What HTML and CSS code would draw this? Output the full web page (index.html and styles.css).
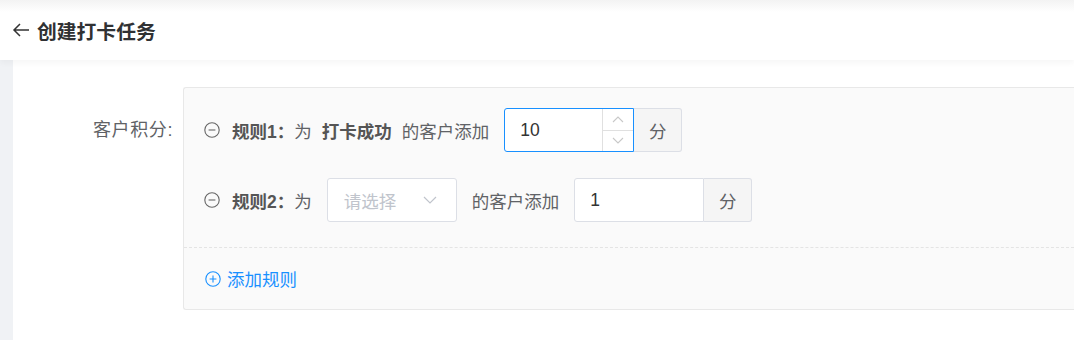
FILE: index.html
```html
<!DOCTYPE html>
<html lang="zh-CN">
<head>
  <meta charset="UTF-8">
  <meta name="viewport" content="width=device-width, initial-scale=1.0">
  <title>创建打卡任务</title>
  <link rel="stylesheet" href="styles.css">
</head>
<body>
  <div class="header">
    <svg class="back" width="18" height="16" viewBox="0 0 18 16">
      <path d="M17 8H2M8 2L2 8l6 6" fill="none" stroke="#333" stroke-width="1.5"/>
    </svg>
    <h1>创建打卡任务</h1>
  </div>

  <div class="layout">
    <div class="side"></div>
    <div class="content">
      <div class="form-item">
        <label class="form-label">客户积分:</label>
        <div class="panel">
          <div class="rules">
            <div class="rule">
              <svg class="icon" width="16" height="16" viewBox="0 0 16 16">
                <circle cx="8" cy="8" r="7.2" fill="none" stroke="#666" stroke-width="1.1"/>
                <path d="M4.6 8h6.8" stroke="#666" stroke-width="1.1"/>
              </svg>
              <span class="bold">规则1：</span><span>为</span>
              <span class="bold event">打卡成功</span>
              <span class="txt">的客户添加</span>
              <div class="number focus">
                <span class="val">10</span>
                <div class="steps">
                  <span class="step"><svg width="12" height="8" viewBox="0 0 12 8"><path d="M1 7l5-5 5 5" fill="none" stroke="#c8c8c8" stroke-width="1.1"/></svg></span>
                  <span class="step"><svg width="12" height="8" viewBox="0 0 12 8"><path d="M1 1l5 5 5-5" fill="none" stroke="#c8c8c8" stroke-width="1.1"/></svg></span>
                </div>
              </div>
              <span class="addon">分</span>
            </div>

            <div class="rule">
              <svg class="icon" width="16" height="16" viewBox="0 0 16 16">
                <circle cx="8" cy="8" r="7.2" fill="none" stroke="#666" stroke-width="1.1"/>
                <path d="M4.6 8h6.8" stroke="#666" stroke-width="1.1"/>
              </svg>
              <span class="bold">规则2：</span><span>为</span>
              <div class="select">
                <span class="placeholder">请选择</span>
                <svg width="14" height="8" viewBox="0 0 14 8"><path d="M1 1l6 6 6-6" fill="none" stroke="#c0c4cc" stroke-width="1.2"/></svg>
              </div>
              <span class="txt">的客户添加</span>
              <div class="number">
                <span class="val">1</span>
              </div>
              <span class="addon">分</span>
            </div>
          </div>

          <div class="panel-foot">
            <a class="add-rule">
              <svg width="16" height="16" viewBox="0 0 16 16">
                <circle cx="8" cy="8" r="7.2" fill="none" stroke="#1890ff" stroke-width="1.1"/>
                <path d="M4.6 8h6.8M8 4.6v6.8" stroke="#1890ff" stroke-width="1.1"/>
              </svg>
              添加规则
            </a>
          </div>
        </div>
      </div>
    </div>
  </div>
</body>
</html>
```

FILE: styles.css
```css
body {
  margin: 0;
  font-family: "Liberation Sans", "Noto Sans CJK SC", sans-serif;
  font-size: 17.5px;
  color: #606266;
  background: #fff;
}
.header {
  height: 60px;
  display: flex;
  align-items: center;
  padding-left: 12px;
  background: linear-gradient(#f3f3f3, #fff 12px);
  box-shadow: 0 3px 6px rgba(0, 0, 0, 0.04);
  position: relative;
}
.header h1 {
  margin: 0 0 0 7px;
  font-size: 19.8px;
  font-weight: bold;
  color: #303133;
}
.back {
  display: block;
}
.layout {
  display: flex;
  height: 280px;
}
.side {
  width: 13px;
  background: #f0f2f5;
}
.content {
  flex: 1;
  padding-top: 27px;
  overflow: hidden;
}
.form-item {
  display: flex;
}
.form-label {
  width: 160px;
  padding-right: 10px;
  padding-top: 21px;
  line-height: 44px;
  font-size: 18px;
  letter-spacing: 0.6px;
  text-align: right;
}
.panel {
  flex: 1;
  background: #fafafa;
  border: 1px solid #e8e8e8;
  border-right: none;
  border-radius: 3px 0 0 3px;
}
.rules {
  padding: 20px 20px 25px;
  display: flex;
  flex-direction: column;
  gap: 26px;
}
.rule {
  display: flex;
  align-items: center;
  height: 44px;
  white-space: nowrap;
}
.icon {
  margin-right: 12px;
}
.bold {
  font-weight: bold;
  color: #555;
}
.event {
  margin: 0 10px;
}
.txt {
  margin-right: 15px;
}
.number {
  width: 130px;
  height: 44px;
  box-sizing: border-box;
  border: 1px solid #dcdfe6;
  border-radius: 3px 0 0 3px;
  background: #fff;
  display: flex;
  align-items: center;
  color: #333;
}
.number.focus {
  border-color: #1890ff;
}
.val {
  flex: 1;
  padding-left: 15px;
}
.steps {
  width: 30px;
  height: 100%;
  border-left: 1px solid #e0e0e0;
  display: flex;
  flex-direction: column;
}
.step {
  flex: 1;
  display: flex;
  align-items: center;
  justify-content: center;
}
.step + .step {
  border-top: 1px solid #e0e0e0;
}
.addon {
  width: 48px;
  height: 44px;
  box-sizing: border-box;
  border: 1px solid #dcdfe6;
  border-left: none;
  border-radius: 0 3px 3px 0;
  background: #f5f5f5;
  display: flex;
  align-items: center;
  justify-content: center;
}
.select {
  width: 130px;
  height: 44px;
  box-sizing: border-box;
  margin: 0 15px;
  padding: 0 19px 0 16px;
  border: 1px solid #dcdfe6;
  border-radius: 3px;
  background: #fff;
  display: flex;
  align-items: center;
  justify-content: space-between;
}
.placeholder {
  color: #c0c4cc;
}
.panel-foot {
  height: 61px;
  border-top: 1px dashed #e4e4e4;
  display: flex;
  align-items: center;
  padding-left: 21px;
}
.add-rule {
  display: flex;
  align-items: center;
  gap: 6px;
  color: #1890ff;
  cursor: pointer;
}
```
